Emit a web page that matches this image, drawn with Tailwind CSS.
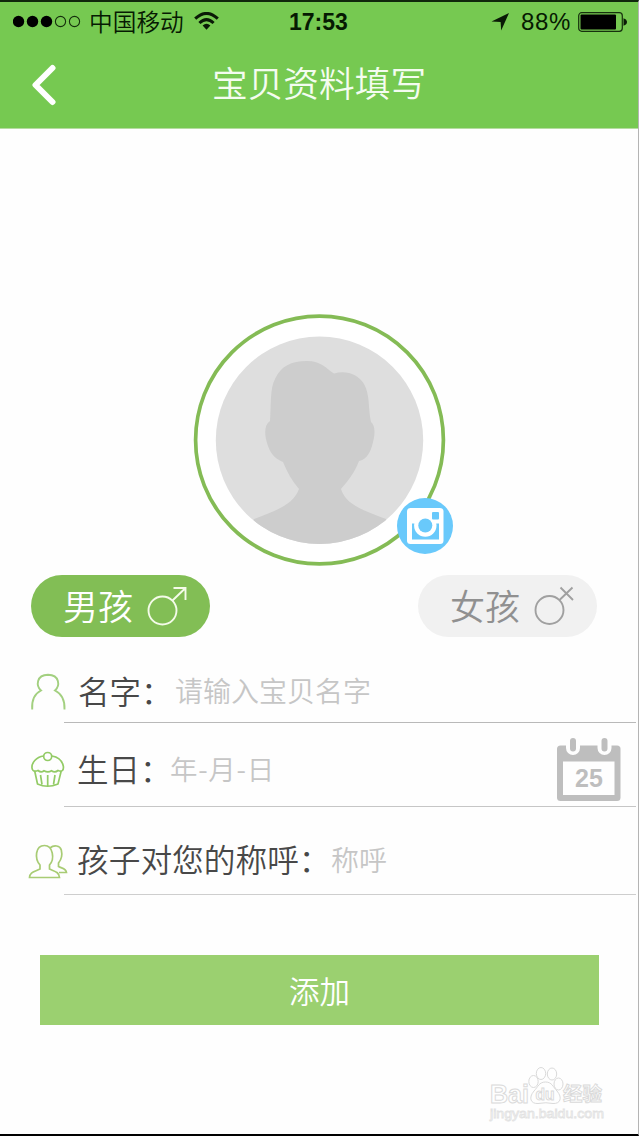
<!DOCTYPE html>
<html lang="zh-CN">
<head>
<meta charset="utf-8">
<title>宝贝资料填写</title>
<script src="https://cdn.jsdelivr.net/npm/@tailwindcss/browser@4"></script>
</head>
<body class="bg-white">
<div class="flex h-[1136px] w-[639px] flex-col overflow-hidden border-t-2 border-r border-b-2 border-t-[#10280c] border-r-[#b4b4b4] border-b-black bg-[#fefefe] font-['Liberation_Sans','Noto_Sans_CJK_SC',sans-serif] whitespace-nowrap">

  <header class="h-[127px] shrink-0 border-b border-[#b5dca0] bg-[#76c951]">
    <div class="flex h-[40px] items-center text-[#061a02]">
      <svg class="ml-[13px] shrink-0" width="68" height="14" viewBox="0 0 68 14">
        <g fill="#000"><circle cx="5.5" cy="6.500" r="5.7"/><circle cx="19.5" cy="6.500" r="5.7"/><circle cx="33.5" cy="6.500" r="5.7"/></g>
        <g fill="none" stroke="#16300d" stroke-width="1.1"><circle cx="47.5" cy="6.500" r="5.1"/><circle cx="61.5" cy="6.500" r="5.1"/></g>
      </svg>
      <span class="-mt-[2px] ml-2 w-[96px] font-['Noto_Sans_CJK_SC',sans-serif] text-[23.7px] leading-[40px] font-[350]">中国移动</span>
      <svg class="-mt-[2px] ml-[9px] shrink-0" width="25" height="18" viewBox="0 0 25 18">
        <path d="M1.2 6.7Q12.5 -3.8 23.8 6.7M5.4 11Q12.5 4.2 19.6 11" fill="none" stroke="#0a1a06" stroke-width="3"/>
        <path d="M8.6 13.6Q12.5 10 16.4 13.6L12.5 17.8Z" fill="#0a1a06"/>
      </svg>
      <span class="ml-[70px] w-[60px] text-[23px] leading-[40px] font-bold">17:53</span>
      <svg class="-mt-px ml-[142px] shrink-0" width="19" height="19" viewBox="0 0 19 19"><path d="M18 1L.5 9.4L9.6 9.9L10.2 18.5Z" fill="#0a1a06"/></svg>
      <span class="ml-[11px] w-[51px] text-[24px] leading-[40px] tracking-[0.7px]">88%</span>
      <svg class="ml-[6px] shrink-0" width="50" height="20" viewBox="0 0 50 20">
        <rect x=".7" y=".7" width="43.6" height="18.600" rx="3" fill="none" stroke="#16300d" stroke-width="1.2"/>
        <rect x="2.5" y="2.5" width="35.5" height="15" rx="1" fill="#000"/>
        <path d="M45.5 6.2Q49 7.5 49 10T45.5 13.8Z" fill="#0a1a06"/>
      </svg>
    </div>
    <div class="flex h-[86px] items-start">
      <svg class="mt-[22px] ml-[30px] shrink-0" width="28" height="42" viewBox="0 0 28 42"><path d="M22.500 4L5.500 21L22.500 38" fill="none" stroke="#fff" stroke-width="6" stroke-linecap="round" stroke-linejoin="round"/></svg>
      <h1 class="mt-[16px] ml-[154px] font-['Noto_Sans_CJK_SC',sans-serif] text-[35.7px] leading-[48px] font-[350] text-[#f4fcf0]">宝贝资料填写</h1>
    </div>
  </header>

  <main class="flex flex-col">
    <div class="mt-[185px] ml-[193px] h-[252px] w-[262px] shrink-0">
      <svg width="262" height="252" viewBox="193 314 262 252">
        <defs><clipPath id="face"><circle cx="319.5" cy="440.3" r="103.7"/></clipPath></defs>
        <circle cx="319.5" cy="440" r="123.9" fill="#fff" stroke="#84bb55" stroke-width="3.7"/>
        <circle cx="319.5" cy="440.3" r="103.7" fill="#dedede"/>
        <path clip-path="url(#face)" fill="#cdcdcd" d="M270 421C271 405 270 388 275 379C281 366 291 361 307 361C321 361 327 369 334 373.5C346 370 358 374 364 384C370 394 368 408 371 422C376 426 375 436 372 446C369 456 364 460 359 461C354 474 347 482 341 489C346 506 368 512 386 519L400 550H240L254 519C272 512 293 506 299 489C292 481 287 472 283 462C277 459 272 457 268 446C264 435 264 425 270 421Z"/>
        <circle cx="425" cy="526" r="28" fill="#69c9fb"/>
        <rect x="407" y="508" width="36.500" height="36" rx="3.500" fill="#fff"/>
        <path d="M412 523.500H416.500A9.500 9.500 0 0 0 434.500 523.500H439V539.500H412Z" fill="#69c9fb"/>
        <circle cx="425.300" cy="525.500" r="11.200" fill="#fff"/>
        <circle cx="425.300" cy="525.500" r="7" fill="#69c9fb"/>
        <rect x="432" y="512" width="7" height="7.500" rx="1" fill="#69c9fb"/>
      </svg>
    </div>

    <div class="mt-[9px] mr-[41px] ml-[31px] flex justify-between font-['Noto_Sans_CJK_SC',sans-serif] text-[35px] leading-[60px] font-[350]">
      <div class="flex h-[62px] w-[179px] rounded-full bg-[#82be55] pl-[32px] text-white">
        <span class="w-[70px]">男孩</span>
        <svg class="mt-[10px] ml-[14px]" width="42" height="42" viewBox="0 0 42 42" fill="none" stroke="#f4fbe9" stroke-width="1.900"><circle cx="15.500" cy="25.500" r="14"/><path d="M25.500 15.500L38 3.500M26.500 3H38.500V15"/></svg>
      </div>
      <div class="flex h-[62px] w-[179px] rounded-full bg-[#f1f1f1] pl-[32px] text-[#909090]">
        <span class="w-[70px]">女孩</span>
        <svg class="mt-[10px] ml-[14px]" width="42" height="42" viewBox="0 0 42 42" fill="none" stroke="#a0a0a0" stroke-width="1.900"><circle cx="15.500" cy="25" r="14"/><path d="M25.500 15L38.500 2.500M26.500 2.500L39 15"/></svg>
      </div>
    </div>

    <section class="ml-[28px] font-['Noto_Sans_CJK_SC',sans-serif] font-[350] text-[#484848]">
      <div class="flex h-[86px]">
        <svg class="mt-[34px] shrink-0" width="40" height="42" viewBox="28 671 40 42" fill="none" stroke="#a3d080" stroke-width="1.900"><path d="M32.200 709.500C31.500 700 34 694 41 690.500C36 686 36 675 48 674.800C60 675 60 686 55 690.500C62 694 65 700 64.500 709.500"/></svg>
        <div class="-ml-[4px] flex w-[572px] border-b border-[#b9b9b9]">
          <label class="mt-[29px] ml-[14px] w-[97px] text-[31.500px] leading-[48px]">名字：</label>
          <span class="mt-[29px] text-[28px] leading-[48px] text-[#c6c6c6]">请输入宝贝名字</span>
        </div>
      </div>
      <div class="flex h-[84px]">
        <svg class="mt-[27px] shrink-0" width="40" height="40" viewBox="28 750 40 40" fill="none" stroke="#93cb66" stroke-width="1.700"><circle cx="47.700" cy="756.500" r="4"/><path d="M43.500 756C36 757 31.500 763 32 768C32.500 772 36 771.500 38 770.500Q41 773 44 770.800Q48 773 51.500 770.800Q55 773 58 770.500C62 772.500 64 770 63.300 766C62 760 58 757 52 756M34.700 771L37.500 784Q47.500 788.500 58 784L61.200 771M40.500 775L42 784.500M47.700 775V785.500M55 775L53.500 784.500"/></svg>
        <div class="-ml-[4px] flex w-[572px] border-b border-[#c6c6c6]">
          <label class="mt-[21px] ml-[13px] w-[93px] text-[31.500px] leading-[48px]">生日：</label>
          <span class="mt-[21px] w-[387px] text-[27.500px] leading-[48px] tracking-[.7px] text-[#c6c6c6]">年-月-日</span>
          <svg class="mt-[14px] shrink-0" width="65" height="66" viewBox="0 0 65 66">
            <rect y="8.500" width="63.500" height="55.500" rx="3.500" fill="#bebebe"/>
            <rect x="6" y="24.500" width="51.500" height="33.500" fill="#fefefe"/>
            <g fill="none" stroke="#fefefe" stroke-width="14" stroke-linecap="round"><path d="M16 3V11M47.500 3V11"/></g>
            <g fill="none" stroke="#bebebe" stroke-width="6" stroke-linecap="round"><path d="M16 4V11.500M47.500 4V11.500"/></g>
            <text x="32" y="49.500" text-anchor="middle" font-family="Liberation Sans, sans-serif" font-size="25" font-weight="700" fill="#bebebe">25</text>
          </svg>
        </div>
      </div>
      <div class="flex h-[88px]">
        <svg class="mt-[35px] shrink-0" width="40" height="40" viewBox="28 842 40 40" fill="none" stroke="#a8cc74" stroke-width="1.700"><path d="M29.500 877.500H59.500C59 872 55 871.500 49.500 869V865C55 859 53 845.500 44.500 845.500C35 845.500 34.500 859 40 865V869C34 872 30 872 29.500 877.500Z"/><path d="M50 848C54 844.500 60 845.500 61.300 850C62.500 855 61 860 58.500 863V866.500C62 868.500 66 868 66.500 872.500H59"/></svg>
        <div class="-ml-[4px] flex w-[572px] border-b border-[#cecece]">
          <label class="mt-[27px] ml-[13px] w-[254px] text-[31.700px] leading-[48px]">孩子对您的称呼：</label>
          <span class="mt-[28px] text-[28px] leading-[48px] text-[#c6c6c6]">称呼</span>
        </div>
      </div>
    </section>

    <button class="mt-[60px] ml-[40px] h-[70px] w-[559px] bg-[#9bd070] font-['Noto_Sans_CJK_SC',sans-serif] text-[30.500px] leading-[70px] font-[350] text-white">添加</button>

    <svg class="mt-[38px] ml-[485px] shrink-0" width="125" height="62" viewBox="485 1063 125 62" fill="#fefefe" stroke="#dadada" stroke-width="1">
      <g font-family="Liberation Sans, sans-serif" font-weight="700">
        <text x="490" y="1103" font-size="26" textLength="39" lengthAdjust="spacingAndGlyphs">Bai</text>
        <ellipse cx="533.500" cy="1081.500" rx="4.700" ry="6"/><ellipse cx="541" cy="1073.500" rx="4.700" ry="6"/><ellipse cx="552" cy="1074" rx="4.700" ry="6"/><ellipse cx="558.500" cy="1084" rx="4.500" ry="6"/>
        <path d="M545.500 1082C539 1082 538 1087 534 1091C528 1098 531 1104 538 1103.500Q546 1102 553 1103.500C560 1104 563 1098 557 1091C553 1087 552 1082 545.500 1082Z"/>
        <text x="535.500" y="1100" font-size="17" textLength="19" lengthAdjust="spacingAndGlyphs">du</text>
        <text x="490" y="1117.500" font-size="13" font-weight="400" stroke="#e2e2e2" stroke-width=".8" textLength="114" lengthAdjust="spacingAndGlyphs">jingyan.baidu.com</text>
      </g>
      <text x="563" y="1101" font-family="Noto Sans CJK SC, sans-serif" font-size="19.500" font-weight="700">经验</text>
    </svg>
  </main>
</div>
</body>
</html>
